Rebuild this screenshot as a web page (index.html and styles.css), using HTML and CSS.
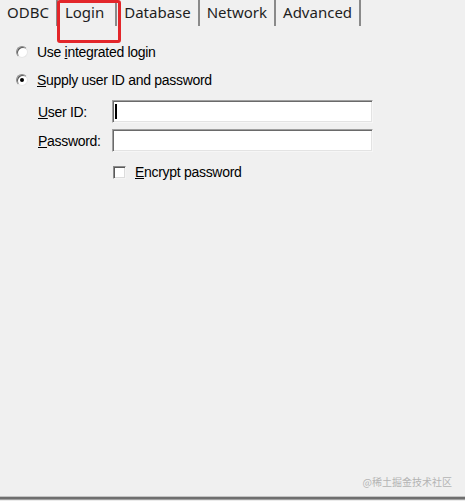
FILE: index.html
```html
<!DOCTYPE html>
<html lang="en">
<head>
<meta charset="utf-8">
<title>Login</title>
<link rel="stylesheet" href="styles.css">
</head>
<body>
<div class="dialog">
  <div class="tabs">
    <div class="tab">ODBC</div>
    <div class="tab active">Login</div>
    <div class="tab">Database</div>
    <div class="tab">Network</div>
    <div class="tab">Advanced</div>
  </div>
  <div class="panel">
    <label class="option"><span class="radio"></span><span>Use <u>i</u>ntegrated login</span></label>
    <label class="option option-second"><span class="radio checked"></span><span><u>S</u>upply user ID and password</span></label>
    <div class="fields">
      <div class="field"><span class="field-label"><u>U</u>ser ID:</span><span class="input"><span class="caret"></span></span></div>
      <div class="field"><span class="field-label"><u>P</u>assword:</span><span class="input"></span></div>
      <label class="option check-row"><span class="checkbox"></span><span><u>E</u>ncrypt password</span></label>
    </div>
  </div>
  <div class="watermark">@稀土掘金技术社区</div>
  <div class="bottom-edge"></div>
</div>
</body>
</html>
```

FILE: styles.css
```css
* { box-sizing: border-box; }
html, body {
  margin: 0;
  padding: 0;
  background: #f0f0f0;
}
.dialog {
  position: relative;
  height: 501px;
  display: flex;
  flex-direction: column;
  background: #f0f0f0;
  font-family: "Liberation Sans", Arial, sans-serif;
  font-size: 14px;
  letter-spacing: -0.3px;
  color: #000;
}
.tabs {
  display: flex;
  height: 26px;
  font-family: "Noto Sans", "Open Sans", sans-serif;
  font-size: 15px;
  letter-spacing: 0;
  color: #1e1e1e;
}
.tab {
  position: relative;
  padding: 2px 7px 0;
  line-height: 20px;
  border-right: 2px solid #8a8a8a;
}
.tab.active {
  padding: 2px 11px 0 7px;
}
.tab.active::after {
  content: "";
  position: absolute;
  left: -1px;
  top: 0;
  width: 58px;
  height: 37px;
  border: 3px solid #e3262a;
  border-radius: 3px;
}
.panel {
  flex: 1;
  padding: 16px 0 0 16px;
}
.option {
  display: flex;
  align-items: center;
  gap: 9px;
  height: 20px;
}
.option-second {
  margin-top: 8px;
}
.radio {
  position: relative;
  width: 12px;
  height: 12px;
  border-radius: 50%;
  background: #fff;
  border: 1px solid;
  border-color: #8c8c8c #e6e6e6 #e6e6e6 #8c8c8c;
  box-shadow: inset 1px 1px 0 #5a5a5a;
}
.radio.checked::after {
  content: "";
  position: absolute;
  left: 3px;
  top: 3px;
  width: 4px;
  height: 4px;
  border-radius: 50%;
  background: #000;
}
.fields {
  margin-top: 10px;
  padding-left: 22px;
}
.field {
  display: flex;
  align-items: center;
  height: 23px;
}
.field + .field {
  margin-top: 6px;
}
.field-label {
  width: 74px;
}
.input {
  display: flex;
  align-items: center;
  width: 261px;
  height: 23px;
  background: #fff;
  border: 1px solid;
  border-color: #a0a0a0 #f6f6f6 #f6f6f6 #a0a0a0;
  box-shadow: inset 1px 1px 0 #6a6a6a, inset -1px -1px 0 #e3e3e3;
  padding-left: 2px;
}
.caret {
  width: 2px;
  height: 15px;
  background: #000;
}
.check-row {
  margin-top: 10px;
  margin-left: 75px;
}
.checkbox {
  width: 13px;
  height: 13px;
  background: #fff;
  border: 1px solid;
  border-color: #8c8c8c #f4f4f4 #f4f4f4 #8c8c8c;
  box-shadow: inset 1px 1px 0 #5a5a5a, inset -1px -1px 0 #dcdcdc;
}
.watermark {
  position: absolute;
  right: 13px;
  top: 475px;
  font-family: "Noto Sans CJK SC", sans-serif;
  font-size: 10px;
  line-height: 14px;
  letter-spacing: 0;
  color: #b4b4b4;
}
.bottom-edge {
  height: 5px;
  background: linear-gradient(to bottom, #c4c4c4 0 1px, #6e6e6e 1px 3px, #a0a0a0 3px 4px, #ebebeb 4px 5px);
}
```
